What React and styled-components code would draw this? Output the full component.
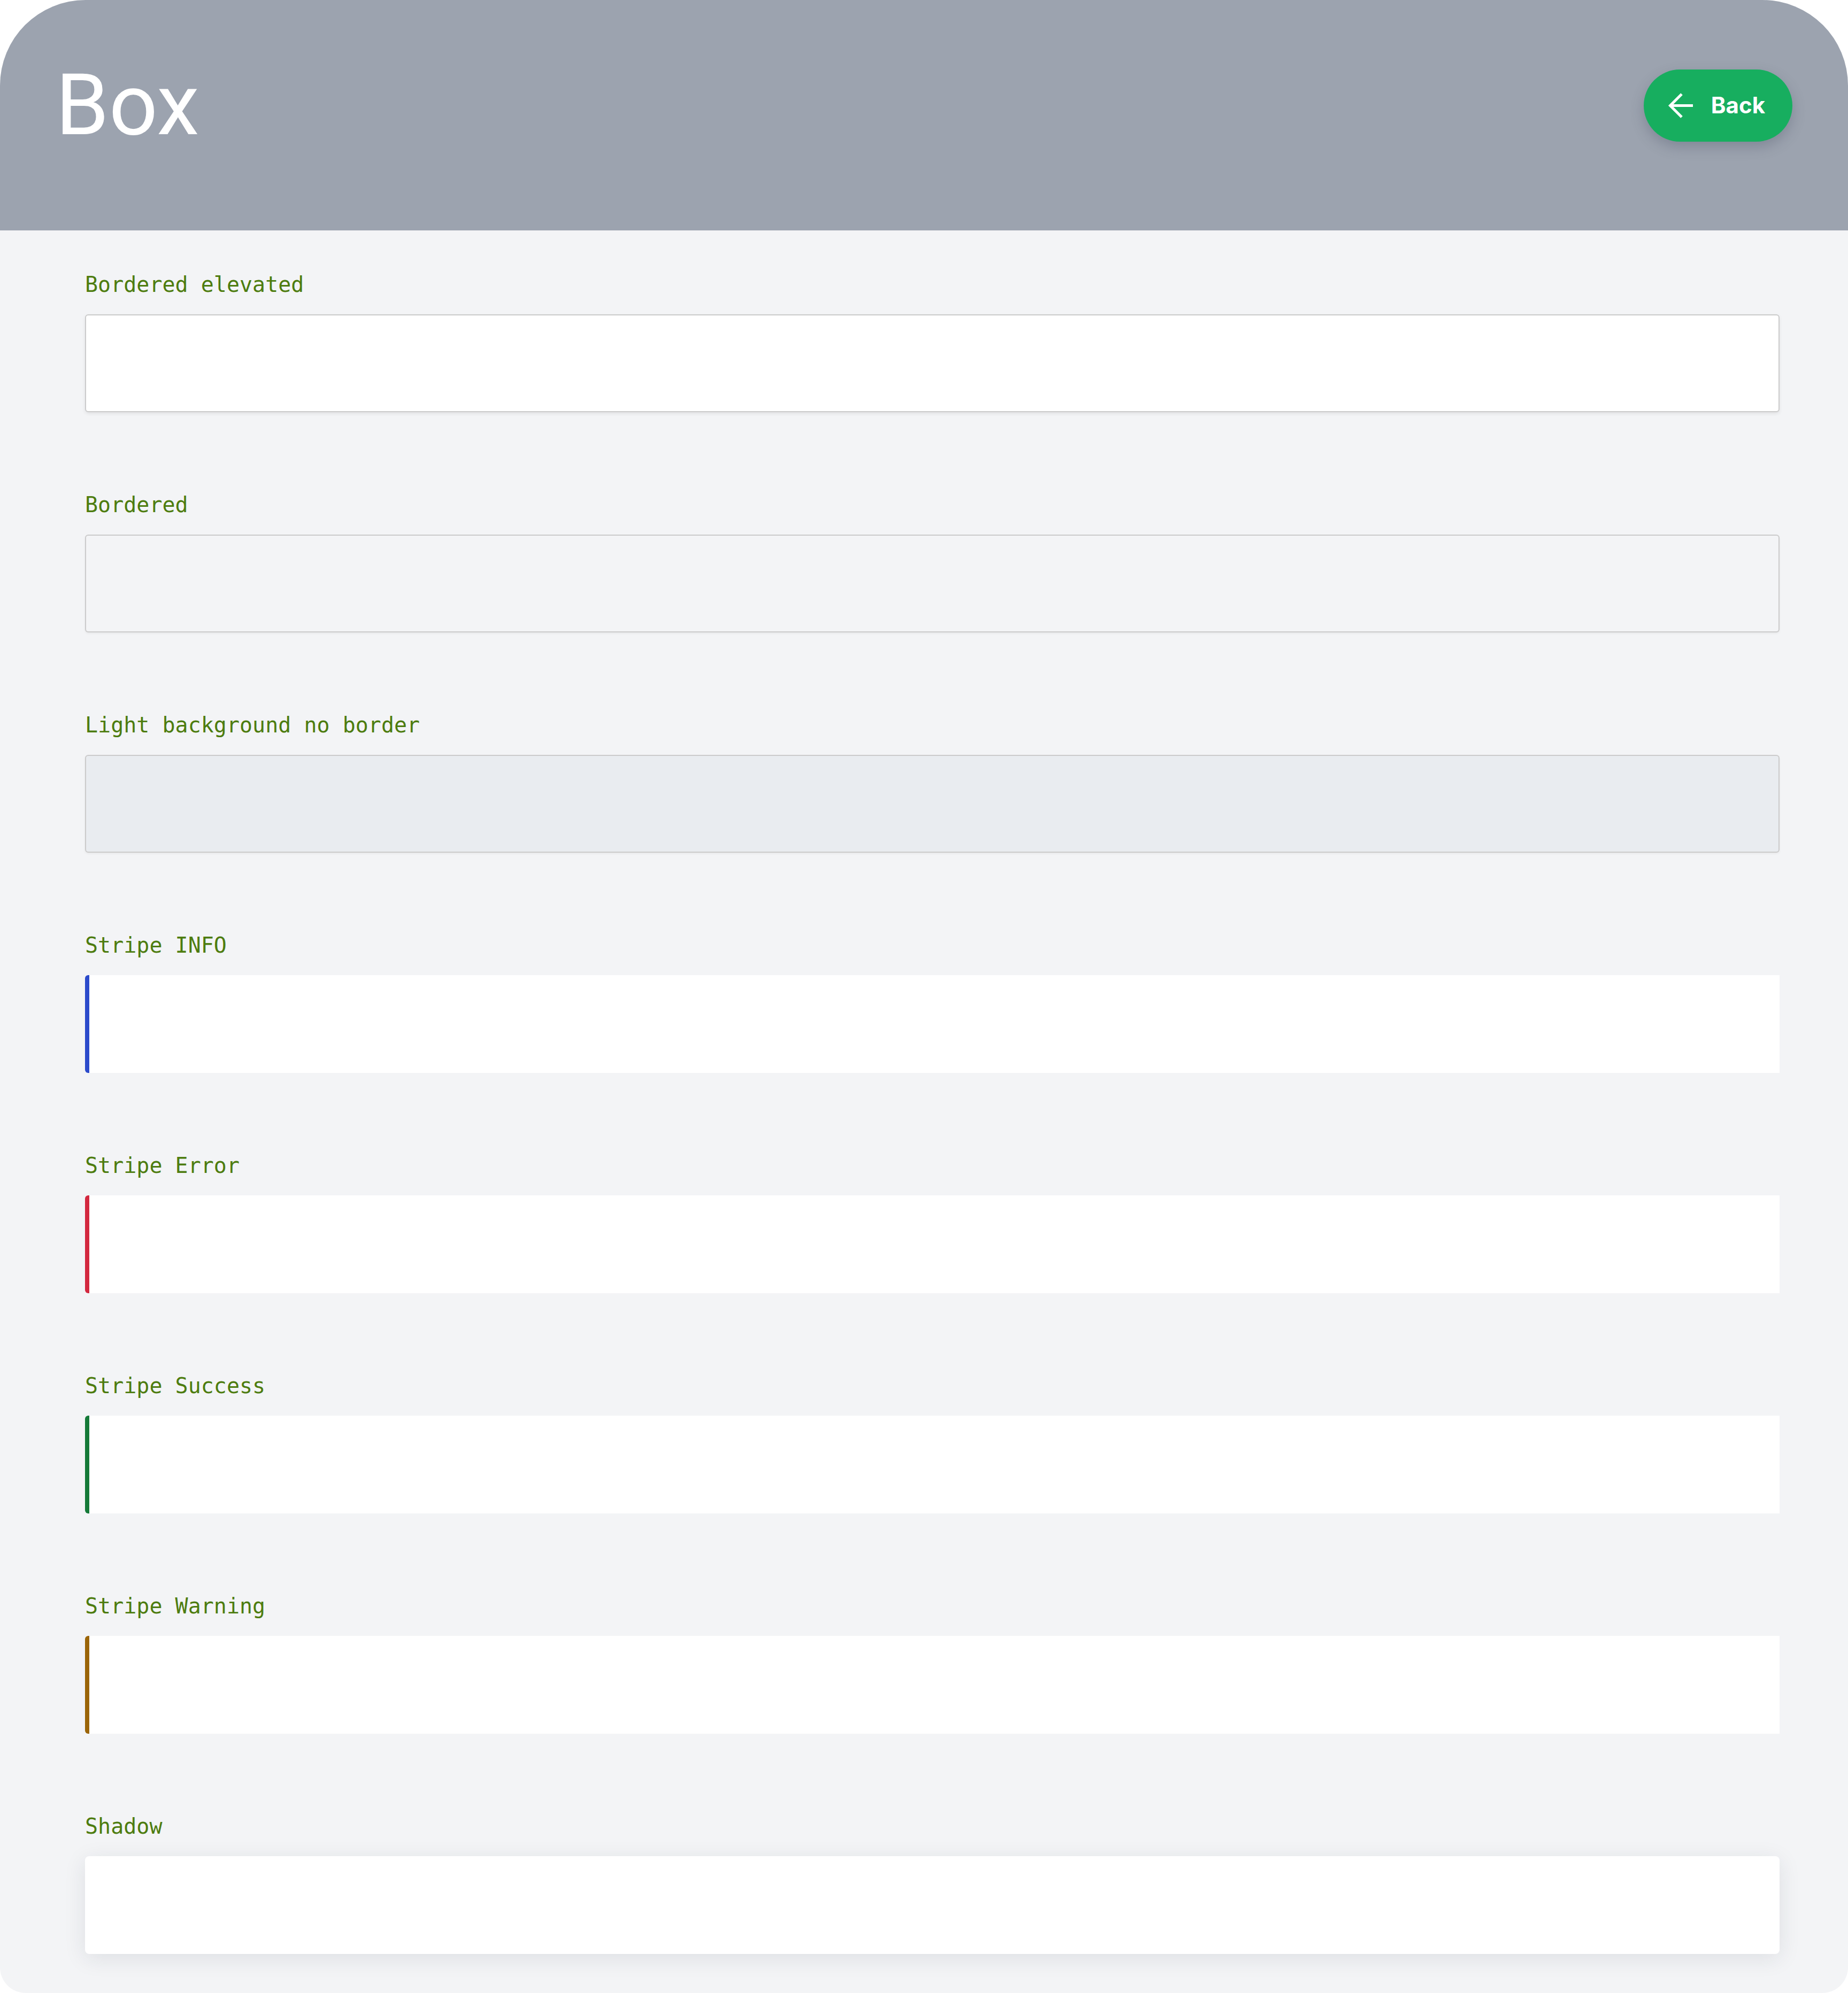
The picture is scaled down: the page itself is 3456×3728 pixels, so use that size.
import React from "react";
import styled, { createGlobalStyle } from "styled-components";

const GlobalStyle = createGlobalStyle`
  html, body {
    margin: 0;
    padding: 0;
    background: #ffffff;
  }
  * { box-sizing: border-box; }
`;

const Page = styled.div`
  width: 3456px;
  height: 3728px;
  background: #f3f4f6;
  border-radius: 160px 160px 48px 48px;
  overflow: hidden;
  display: flex;
  flex-direction: column;
`;

const Header = styled.header`
  flex: none;
  height: 431px;
  background: #9ca3af;
  padding: 62px 104px 0;
  display: flex;
  justify-content: space-between;
  align-items: flex-start;
`;

const HeaderRow = styled.div`
  height: 270px;
  display: flex;
  align-items: center;
`;

const Title = styled.h1`
  margin: 0;
  font-family: Roboto, "Noto Sans", sans-serif;
  font-weight: 400;
  font-size: 160px;
  line-height: 1;
  color: #ffffff;
`;

const BackButton = styled.button`
  height: 135px;
  display: flex;
  align-items: center;
  gap: 34px;
  padding: 0 51px 0 45px;
  border: none;
  border-radius: 999px;
  background: #17ae5f;
  color: #ffffff;
  font-family: Inter, "Noto Sans", sans-serif;
  font-weight: 700;
  font-size: 42px;
  line-height: 1;
  box-shadow: 0 10px 24px rgba(60, 70, 90, 0.28);
  cursor: pointer;
`;

const Arrow = styled.svg`
  width: 47px;
  height: 47px;
  overflow: visible;
  flex: none;
`;

const Content = styled.main`
  padding: 73px 128px 0 159px;
  display: flex;
  flex-direction: column;
  gap: 145px;
`;

const Section = styled.section`
  display: flex;
  flex-direction: column;
  gap: 28px;
`;

const Label = styled.div`
  font-family: "DejaVu Sans Mono", "Liberation Mono", monospace;
  font-size: 40px;
  line-height: 56px;
  color: #4d7c0f;
  white-space: pre;
`;

const variants = {
  elevated: `
    background: #ffffff;
    border: 2px solid #cbcbcb;
    border-radius: 6px;
    box-shadow: 0 3px 6px rgba(0, 0, 0, 0.08);
  `,
  bordered: `
    background: #f3f4f6;
    border: 2px solid #cbcbcb;
    border-radius: 6px;
    box-shadow: 0 2px 4px rgba(0, 0, 0, 0.05);
  `,
  light: `
    background: #e9ecf0;
    border: 2px solid #cbcbcb;
    border-radius: 6px;
    box-shadow: 0 2px 4px rgba(0, 0, 0, 0.05);
  `,
  shadow: `
    background: #ffffff;
    border-radius: 8px;
    box-shadow: 0 8px 40px rgba(30, 40, 60, 0.1);
  `,
};

const Box = styled.div`
  height: 183px;
  ${(p) => (p.$stripe ? `
    background: #ffffff;
    border-left: 8px solid ${p.$stripe};
    border-radius: 6px 0 0 6px;
  ` : variants[p.$variant])}
`;

const sections = [
  { label: "Bordered elevated", variant: "elevated" },
  { label: "Bordered", variant: "bordered" },
  { label: "Light background no border", variant: "light" },
  { label: "Stripe INFO", stripe: "#2b4acb" },
  { label: "Stripe Error", stripe: "#d3283f" },
  { label: "Stripe Success", stripe: "#157a38" },
  { label: "Stripe Warning", stripe: "#9b6508" },
  { label: "Shadow", variant: "shadow" },
];

export default function App() {
  return (
    <>
      <GlobalStyle />
      <Page>
        <Header>
          <HeaderRow>
            <Title>Box</Title>
          </HeaderRow>
          <HeaderRow>
            <BackButton>
              <Arrow viewBox="0 0 47 47" fill="none" stroke="#ffffff" strokeWidth="5">
                <path d="M4 23.5H47" />
                <path d="M26 2L4.5 23.5L26 45" />
              </Arrow>
              Back
            </BackButton>
          </HeaderRow>
        </Header>
        <Content>
          {sections.map((s) => (
            <Section key={s.label}>
              <Label>{s.label}</Label>
              <Box $variant={s.variant} $stripe={s.stripe} />
            </Section>
          ))}
        </Content>
      </Page>
    </>
  );
}
